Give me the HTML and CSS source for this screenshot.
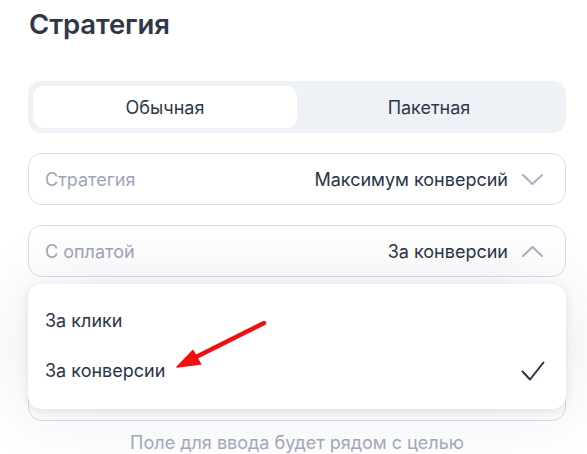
FILE: index.html
```html
<!DOCTYPE html>
<html lang="ru">
<head>
<meta charset="utf-8">
<link rel="stylesheet" href="styles.css">
</head>
<body>
<div class="page">
  <h1 class="title">Стратегия</h1>
  <div class="segmented">
    <div class="seg seg-active">Обычная</div>
    <div class="seg">Пакетная</div>
  </div>
  <div class="field">
    <span class="label">Стратегия</span>
    <span class="value">Максимум конверсий</span>
    <svg class="chev" width="21" height="11" viewBox="0 0 21 11"><path d="M1 1 L10.5 10 L20 1" fill="none" stroke="#a9b0c1" stroke-width="2" stroke-linecap="round" stroke-linejoin="round"/></svg>
  </div>
  <div class="field">
    <span class="label">С оплатой</span>
    <span class="value">За конверсии</span>
    <svg class="chev" width="21" height="11" viewBox="0 0 21 11"><path d="M1 10 L10.5 1 L20 10" fill="none" stroke="#a9b0c1" stroke-width="2" stroke-linecap="round" stroke-linejoin="round"/></svg>
  </div>
  <div class="below">
    <div class="field behind"></div>
    <div class="menu">
      <div class="item">За клики</div>
      <div class="item">
        <span>За конверсии</span>
        <svg class="check" width="24" height="20" viewBox="0 0 24 20"><path d="M1.5 10.5 L9 18.5 L22.5 1.5" fill="none" stroke="#2b3447" stroke-width="2" stroke-linecap="round" stroke-linejoin="round"/></svg>
      </div>
    </div>
  </div>
  <p class="hint">Поле для ввода будет рядом с целью</p>
</div>
<svg class="annot" width="587" height="454" viewBox="0 0 587 454">
  <line x1="264" y1="323" x2="194" y2="358" stroke="#f01010" stroke-width="4.5" stroke-linecap="round"/>
  <polygon points="177,367 193,350.5 200.5,364" fill="#f01010" stroke="#f01010" stroke-width="1.5" stroke-linejoin="round"/>
</svg>
</body>
</html>
```
FILE: styles.css
```css
* { box-sizing: border-box; }
html, body { margin: 0; padding: 0; background: #ffffff; }
body {
  width: 587px;
  height: 454px;
  overflow: hidden;
  position: relative;
  font-family: Inter, "Noto Sans", sans-serif;
  color: #2b3447;
}
.page {
  padding: 8px 21px 0 28px;
}
.title {
  margin: 0 0 41px 1px;
  font-size: 27.5px;
  line-height: 32px;
  font-weight: 600;
  color: #2f3748;
  letter-spacing: -0.1px;
}
.segmented {
  height: 52px;
  padding: 5px;
  background: #eef1f6;
  border-radius: 14px;
  display: grid;
  grid-template-columns: 1fr 1fr;
}
.seg {
  display: flex;
  align-items: center;
  justify-content: center;
  font-size: 18px;
  color: #2f3748;
  border-radius: 11px;
}
.seg-active { background: #ffffff; }
.field {
  height: 52px;
  margin-top: 20px;
  border: 1px solid #d9dde7;
  border-radius: 14px;
  background: #ffffff;
  display: flex;
  align-items: center;
  padding: 0 22px 0 16px;
  font-size: 18px;
}
.label { color: #9ea6b8; flex: 1; }
.value { color: #2b3447; margin-right: 14px; }
.chev { display: block; }
.below { position: relative; padding-top: 20px; }
.field.behind { height: 124px; margin-top: 0; }
.menu {
  position: absolute;
  top: 7px;
  left: 0;
  right: 0;
  height: 125px;
  background: #ffffff;
  border-radius: 14px;
  padding: 11px 21px 14px 17px;
  box-shadow: 0 2px 8px rgba(40, 50, 90, 0.10), 0 0 70px rgba(40, 50, 90, 0.11);
}
.item {
  height: 50px;
  display: flex;
  align-items: center;
  justify-content: space-between;
  font-size: 18px;
  color: #2b3447;
}
.check { display: block; margin-top: 2px; }
.hint {
  margin: 10px 0 0 0;
  text-align: center;
  font-size: 18px;
  line-height: 24px;
  color: #a3abbd;
}
.annot {
  position: absolute;
  left: 0;
  top: 0;
  pointer-events: none;
}
```
